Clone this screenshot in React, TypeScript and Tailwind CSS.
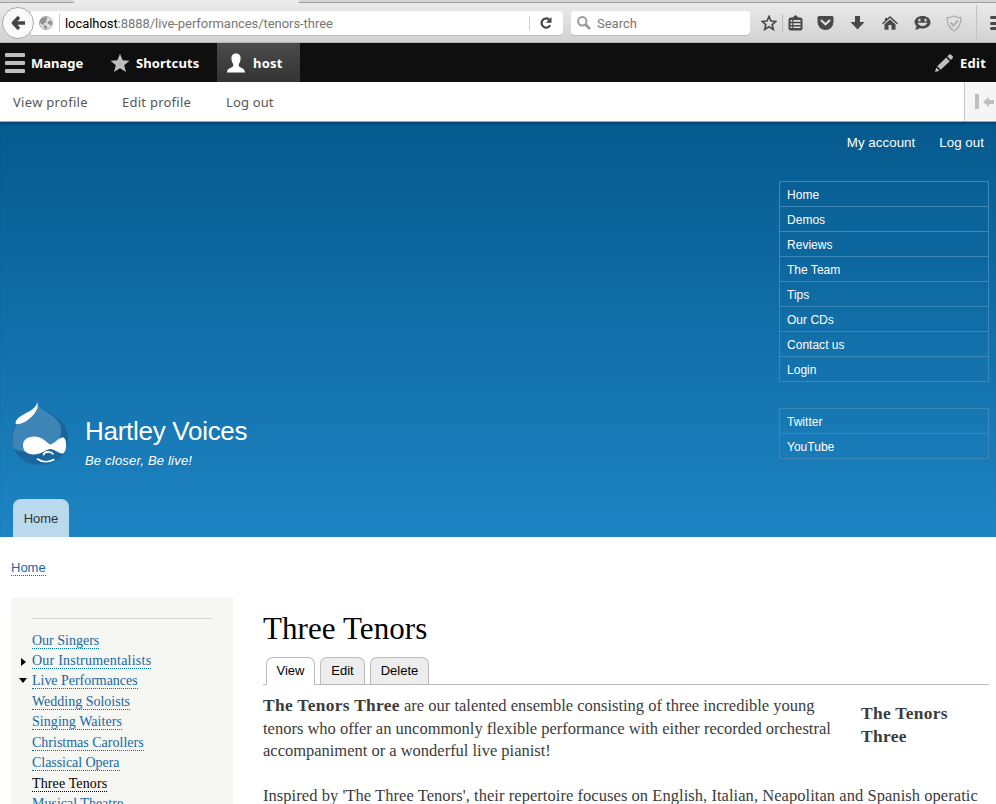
import type { ReactNode } from "react";

const sans = "font-['Liberation_Sans',sans-serif]";
const serif = "font-['Liberation_Serif',serif]";
const ui = "font-['Noto_Sans',sans-serif]";

function BrowserBar() {
  return (
    <div className="h-[43px] shrink-0 border-b border-[#b4b4b4] bg-linear-to-b from-[#ececec] to-[#d2d2d2] font-['Roboto',sans-serif] text-[#777]">
      <div className="flex h-[3px] justify-between border-b border-[#a0a0a0] bg-[#d4d4d4]">
        <div className="ml-[73px] h-[3px] w-[227px] rounded-b-[3px] bg-[#ececec]" />
      </div>
      <div className="flex h-[40px] items-center">
        <div className="z-10 ml-[2px] flex size-[32px] items-center justify-center rounded-full border border-[#aaa] bg-[#fafafa]">
          <svg width="15" height="14" viewBox="0 0 15 14" fill="none" stroke="#444" strokeWidth="3.400">
            <path d="M8 1 2.400 7 8 13M2.600 7H14" strokeLinejoin="round" />
          </svg>
        </div>
        <div className="-ml-[3px] flex h-[24px] w-[532px] items-center rounded-r-[4px] bg-white shadow-[0_1px_0_#bbb]">
          <svg className="ml-[8px]" width="14" height="14" viewBox="0 0 15 15">
            <circle cx="7.500" cy="7.500" r="7" fill="#dcdcdc" stroke="#aaa" />
            <path d="M1 4 4 1.500 8 1 9 3 7.500 4.500 8 6.500 6 7 5 9.500 2.500 8.500 1 6.500ZM9.500 6 12 4.500 14 7 13.500 10 11.500 9.500 9.500 8ZM5 10 8 10.500 9 12 7.500 14 5.500 13Z" fill="#929292" />
          </svg>
          <div className="ml-[6px] h-[18px] w-px bg-[#ccc]" />
          <div className="ml-[5px] w-[464px] pt-px whitespace-nowrap text-[13px]">
            <span className="tracking-[-0.055px]"><span className="text-black">localhost</span>:8888/live-performances/tenors-three</span>
          </div>
          <div className="h-[14px] w-px bg-[#ccc]" />
          <svg className="ml-[9px]" width="14" height="14" viewBox="0 0 14 14">
            <path d="M10 3.400A4.600 4.600 0 1 0 11.200 9.300" fill="none" stroke="#444" strokeWidth="2.200" />
            <path d="M12.500 1V6.800H6.800Z" fill="#444" />
          </svg>
        </div>
        <div className="ml-[8px] flex h-[24px] w-[179px] items-center rounded-[4px] bg-white pl-[6px] shadow-[0_1px_0_#bbb]">
          <svg width="14" height="14" viewBox="0 0 14 14" fill="none" stroke="#999" strokeWidth="2">
            <circle cx="5.300" cy="5.300" r="4.200" />
            <path d="M8.500 8.500 13 13" strokeWidth="2.600" />
          </svg>
          <span className="ml-[6px] pt-px text-[13px]">Search</span>
        </div>
        <svg className="ml-[11px]" width="16" height="16" viewBox="0 0 16 16">
          <path d="M8 1.500 10 6 14.800 6.400 11.200 9.600 12.300 14.400 8 11.800 3.700 14.400 4.800 9.600 1.200 6.400 6 6Z" fill="none" stroke="#494949" strokeWidth="1.700" />
        </svg>
        <div className="ml-[5px] h-[18px] w-px bg-[#bbb]" />
        <svg className="ml-[5px]" width="15" height="16" viewBox="0 0 15 16">
          <path d="M2 2.500H4.500L7.500 0 10.500 2.500H13L14.500 4V14L13 15.500H2L.5 14V4Z" fill="#494949" />
          <path d="M2.500 5H4.200V6.700H2.500ZM5.400 5H12.500V6.700H5.400ZM2.500 8.200H4.200V9.900H2.500ZM5.400 8.200H12.500V9.900H5.400ZM2.500 11.400H4.200V13.100H2.500ZM5.400 11.400H12.500V13.100H5.400Z" fill="#ddd" />
        </svg>
        <svg className="ml-[14px]" width="17" height="16" viewBox="0 0 17 16">
          <path d="M2 1H15Q16.500 1 16.500 2.500V7A8 8 0 0 1 .5 7V2.500Q.5 1 2 1Z" fill="#494949" />
          <path d="M4.500 5.500 8.500 9.300 12.500 5.500" fill="none" stroke="#e4e4e4" strokeWidth="2" strokeLinecap="round" />
        </svg>
        <svg className="ml-[16px]" width="15" height="16" viewBox="0 0 15 16" fill="#494949">
          <path d="M5 1H10V7H14.500L7.500 14.500.5 7H5Z" />
        </svg>
        <svg className="ml-[17px]" width="16" height="16" viewBox="0 0 16 16" fill="#494949">
          <path d="M8 1 16 8.200 15 9.200 8 3.100 1 9.200 0 8.200 3 5.500V3H5V3.700ZM8 4.500 13.500 9.300V14.800H9.500V10H6.500V14.800H2.500V9.300Z" />
        </svg>
        <svg className="ml-[16px]" width="17" height="16" viewBox="0 0 17 16">
          <path d="M8.500 1C4 1 .5 3.700.5 7.300Q.5 9.500 2.500 11.300 2 13.500.8 14.500 4 14.700 5.700 13.200C11 14.500 16.500 12 16.500 7.300 16.500 3.700 13 1 8.500 1Z" fill="#494949" />
          <path d="M5.500 3.700V6.500M11.500 3.700V6.500" stroke="#ddd" strokeWidth="2" />
          <path d="M3.500 7.800H13.500C12.500 11.900 4.500 11.900 3.500 7.800Z" fill="#ddd" />
        </svg>
        <svg className="ml-[15px]" width="16" height="17" viewBox="0 0 16 17" fill="none" stroke="#aaa" strokeWidth="1.300">
          <path d="M8 1Q11 2.500 15 2.800C15 8.500 13.500 13 8 16 2.500 13 1 8.500 1 2.800Q5 2.500 8 1Z" />
          <path d="M4.700 7.500 7.500 10.700 12 5.200" strokeWidth="1.700" />
        </svg>
        <div className="ml-[14px] h-[36px] w-px bg-[#c2c2c2]" />
        <div className="ml-[13px] flex w-[6px] flex-col gap-[2.500px]">
          <div className="h-[3px] rounded-l bg-[#494949]" />
          <div className="h-[3px] rounded-l bg-[#494949]" />
          <div className="h-[3px] rounded-l bg-[#494949]" />
        </div>
      </div>
    </div>
  );
}

function AdminBar() {
  return (
    <div className={`flex h-[39px] shrink-0 items-center bg-[#0f0f0f] text-[13px] leading-[18px] font-bold text-white ${ui}`}>
      <div className="ml-[5px] flex w-[20px] flex-col gap-[4px]">
        <div className="h-[4px] rounded-[1px] bg-[#bebebe]" />
        <div className="h-[4px] rounded-[1px] bg-[#bebebe]" />
        <div className="h-[4px] rounded-[1px] bg-[#bebebe]" />
      </div>
      <div className="ml-[6px] w-[79px]">Manage</div>
      <svg width="20" height="20" viewBox="0 0 20 20" fill="#bebebe">
        <path d="M10 .7 12.600 7.300 19.500 7.700 14.200 12.200 16 19 10 15.200 4 19 5.800 12.200.5 7.700 7.400 7.300Z" />
      </svg>
      <div className="ml-[6px] w-[81px] tracking-[0.080px]">Shortcuts</div>
      <div className="flex h-full w-[83px] items-center bg-linear-to-b from-[#4c4c4c] to-[#333] pl-[9px]">
        <svg width="20" height="20" viewBox="0 0 20 20" fill="white">
          <path d="M10 .5C13.500.5 15 3 14.500 6.500 14.200 9.500 12.500 10.500 12.700 12.500 12.800 14.800 19 14.500 19 19.500H1C1 14.500 7.200 14.800 7.300 12.500 7.500 10.500 5.800 9.500 5.500 6.500 5 3 6.500.5 10 .5Z" />
        </svg>
        <span className="ml-[7px] tracking-[0.200px]">host</span>
      </div>
      <svg className="ml-[634px]" width="20" height="20" viewBox="0 0 20 20" fill="#bebebe">
        <path d="M1 19 2.300 14.500 5.500 17.700ZM3.200 13.300 12.200 4.600 15.800 8.200 6.700 16.800ZM13.300 3.500 15.500 1.200Q16.500.8 18.800 3.200 19.200 4 18.800 5L16.800 7.100Z" />
      </svg>
      <span className="ml-[6px] tracking-[0.300px]">Edit</span>
    </div>
  );
}

function Tray() {
  return (
    <div className={`flex h-[40px] shrink-0 items-center border-b border-[#aaa] bg-white text-[13px] leading-[18px] text-[#565656] ${ui}`}>
      <span className="ml-[13px] w-[109px] tracking-[0.300px]">View profile</span>
      <span className="w-[104px] tracking-[0.250px]">Edit profile</span>
      <span className="w-[738px] tracking-[0.150px]">Log out</span>
      <div className="flex h-full w-[32px] shrink-0 items-center border-l border-[#c5c5c5] bg-[#f5f5f5] pl-[10px]">
        <div className="h-[15px] w-[4px] shrink-0 bg-[#bebebe]" />
        <svg className="ml-[4px] shrink-0" width="13" height="10" viewBox="0 0 13 10" fill="#bebebe">
          <path d="M0 5 6 0V3H11V7H6V10Z" />
        </svg>
      </div>
    </div>
  );
}

function MenuBox({ items }: { items: string[] }) {
  return (
    <ul className="border border-b-0 border-[#3d88b8] text-[12px]">
      {items.map((item) => (
        <li key={item} className="h-[25px] border-b border-[#3d88b8] pl-[7px] leading-[26px] tracking-[0.020px]">{item}</li>
      ))}
    </ul>
  );
}

function DrupalLogo() {
  return (
    <svg width="58" height="65" viewBox="0 0 58 65">
      <path d="M26.500 0C28 8 36 9.500 43 14.500 52 20.500 57.200 27 57.200 37 57.200 53 45 64 29 64 13 64 .8 52.500.8 37.500.8 28 4.500 22 11 17.500 18 12.500 26 9 26.500 0Z" fill="#1a659b" />
      <path d="M26.500 1C29 9 35 10 41 14.500 49 20.500 52 27 49 36 44 50 24 56 3 48 -.5 38 1 26 11 18.500 20 12 26 9 26.500 1Z" fill="#3c85b6" />
      <path d="M26.500 0C26 5 22 8.500 17 11 10 14.500 5 18 4.500 21.500 4.500 24 7 23.500 10 22.500 17 20 23 15 26.500 7Z" fill="#fff" />
      <path d="M39 43.500C35 41 31 35.500 23 35.500 16 35.500 12 39 12 44.500 12 50 16 53.500 22.500 53.500 30 53.500 34 49 39 48 44 48 47 52.500 51.500 52.500 56 52 56.500 38.500 52.500 36.500 47.500 36 44 42.500 39 43.500Z" fill="white" />
      <path d="M32.500 53.800C33.500 50 40 50 42 53M26.500 58C31 61.500 38 61.500 43 58.500" fill="none" stroke="white" strokeWidth="1.600" strokeLinecap="round" />
    </svg>
  );
}

function Header() {
  return (
    <header className={`flex h-[415px] shrink-0 justify-between bg-linear-to-b from-[#055a8e] to-[#1d84c3] text-white shadow-[inset_0_3px_3px_-2px_#003a63] ${sans}`}>
      <div className="flex flex-col justify-end">
        <div className="mb-[33px] ml-[11px] flex h-[65px]">
          <DrupalLogo />
          <div className="ml-[16px] whitespace-nowrap">
            <div className="mt-[14px] text-[26px] leading-[32px] tracking-[-0.280px]">Hartley Voices</div>
            <div className="mt-[6px] text-[13px] leading-[16px] tracking-[0.200px] italic">Be closer, Be live!</div>
          </div>
        </div>
        <div className="ml-[13px] h-[38px] w-[56px] rounded-t-[8px] bg-[#bbd9ec] text-center text-[13px] leading-[40px] text-[#333]">Home</div>
      </div>
      <div className="mr-[7px] w-[210px]">
        <div className="mt-[12px] mr-[5px] flex h-[18px] justify-end gap-[24px] text-[13.300px] leading-[18px] tracking-[0.050px] whitespace-nowrap">
          <span>My account</span><span>Log out</span>
        </div>
        <div className="mt-[29px] flex flex-col gap-[26px]">
          <MenuBox items={["Home", "Demos", "Reviews", "The Team", "Tips", "Our CDs", "Contact us", "Login"]} />
          <MenuBox items={["Twitter", "YouTube"]} />
        </div>
      </div>
    </header>
  );
}

function SideLink({ children, arrow, row, active = false }: { children: ReactNode; arrow?: "right" | "down"; row: string; active?: boolean }) {
  return (
    <li className={`flex ${row}`}>
      <span className="flex w-[21px] items-start pt-[5px] pl-[8px]">
        {arrow === "right" && <svg className="ml-[2px]" width="5" height="8" viewBox="0 0 5 8"><path d="M0 0 5 4 0 8Z" /></svg>}
        {arrow === "down" && <svg width="8" height="5" viewBox="0 0 8 5"><path d="M0 0H8L4 5Z" /></svg>}
      </span>
      <span className={active ? "h-[16px] border-b border-dotted border-black leading-[16px] text-black" : "h-[16px] border-b border-dotted border-[#0071b3] leading-[16px] text-[#1668a8]"}>{children}</span>
    </li>
  );
}

function Sidebar() {
  return (
    <aside className={`ml-[11px] h-[206px] w-[222px] overflow-hidden bg-[#f6f6f2] text-[14px] whitespace-nowrap ${serif}`}>
      <div className="mx-[21px] mt-[20px] mb-[14px] h-px bg-[#d3d3cf]" />
      <ul>
        <SideLink row="h-[20px]">Our Singers</SideLink>
        <SideLink row="h-[20px] tracking-[0.230px]" arrow="right">Our Instrumentalists</SideLink>
        <SideLink row="h-[21px] tracking-[-0.030px]" arrow="down">Live Performances</SideLink>
        <SideLink row="h-[20px]">Wedding Soloists</SideLink>
        <SideLink row="h-[21px] tracking-[0.050px]">Singing Waiters</SideLink>
        <SideLink row="h-[20px]">Christmas Carollers</SideLink>
        <SideLink row="h-[21px] tracking-[-0.050px]">Classical Opera</SideLink>
        <SideLink row="h-[20px] tracking-[0.130px]" active>Three Tenors</SideLink>
        <SideLink row="h-[20px]">Musical Theatre</SideLink>
      </ul>
    </aside>
  );
}

function Article() {
  return (
    <article className="ml-[30px] w-[726px] whitespace-nowrap">
      <h1 className={`mt-[13px] h-[36px] text-[31px] leading-[36px] tracking-[0.080px] text-black ${serif}`}>Three Tenors</h1>
      <div className={`mt-[10px] flex h-[28px] items-end gap-[5px] border-b border-[#bbb] pl-[3px] text-center text-[13px] leading-[26px] text-black ${sans}`}>
        <div className="-mb-px h-[28px] w-[49px] rounded-t-[7px] border border-b-0 border-[#bbb] bg-white">View</div>
        <div className="h-[27px] w-[45px] rounded-t-[7px] border border-b-0 border-[#bbb] bg-[#ededed]">Edit</div>
        <div className="h-[27px] w-[59px] rounded-t-[7px] border border-b-0 border-[#bbb] bg-[#ededed]">Delete</div>
      </div>
      <div className={`flex text-[16.500px] leading-[22.500px] text-[#3b3b3b] ${serif}`}>
        <div className="mt-[9px] w-[598px]">
          <p><b className="text-[17.400px] tracking-[0.320px]">The Tenors Three</b><span> are our talented ensemble consisting of three incredible young</span></p>
          <p>tenors who offer an uncommonly flexible performance with either recorded orchestral</p>
          <p className="tracking-[-0.010px]">accompaniment or a wonderful live pianist!</p>
          <p className="mt-[22.500px] tracking-[0.050px]">Inspired by 'The Three Tenors', their repertoire focuses on English, Italian, Neapolitan and Spanish operatic</p>
        </div>
        <div className="mt-[17px] text-[17.400px] leading-[23px] font-bold tracking-[0.320px]"><p>The Tenors</p><p>Three</p></div>
      </div>
    </article>
  );
}

export default function App() {
  return (
    <div className="flex h-[804px] w-[996px] flex-col overflow-hidden bg-white">
      <BrowserBar />
      <AdminBar />
      <Tray />
      <Header />
      <nav className={`h-[61px] shrink-0 pt-[21px] pl-[11px] text-[13px] text-[#1668a8] ${sans}`}>
        <span className="inline-block h-[17px] border-b border-dotted border-[#0071b3] leading-[17px]">Home</span>
      </nav>
      <main className="flex"><Sidebar /><Article /></main>
    </div>
  );
}
